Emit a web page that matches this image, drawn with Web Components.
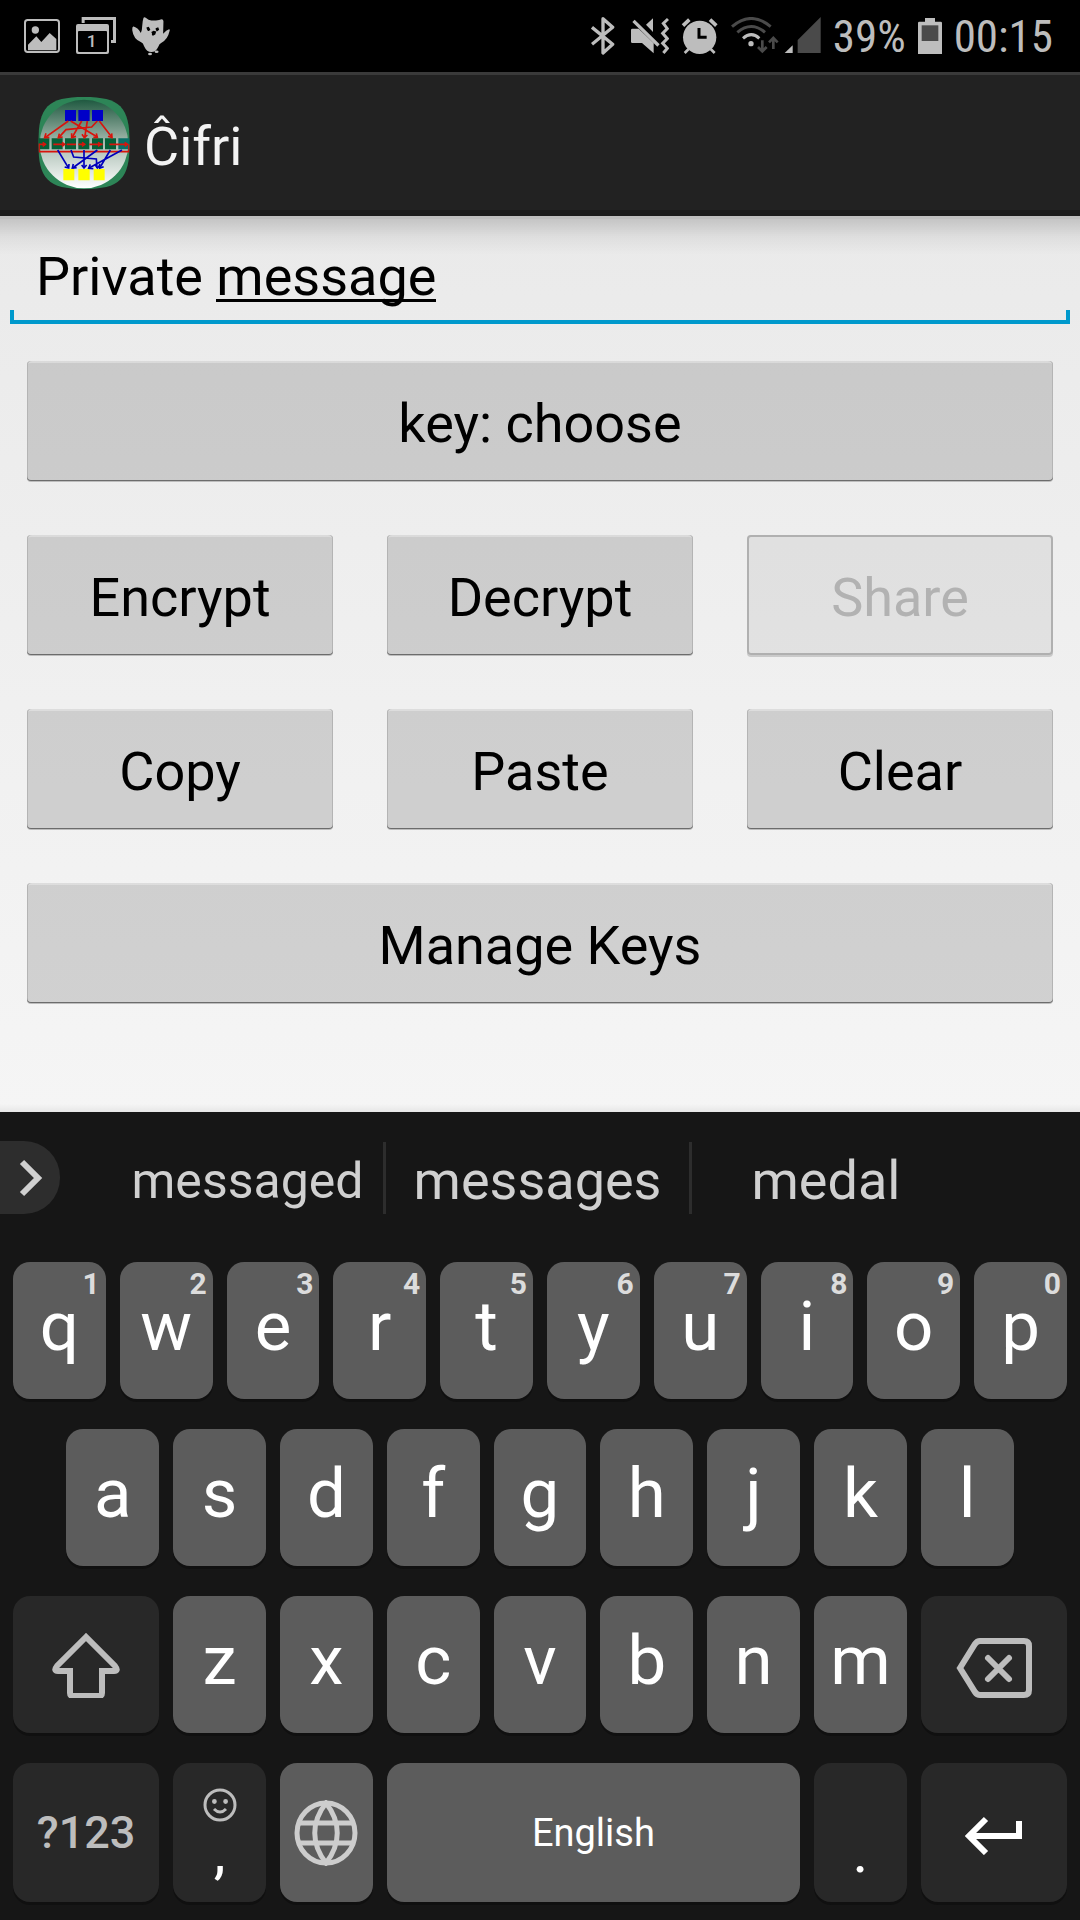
<!DOCTYPE html>
<html lang="en">
<head>
<meta charset="utf-8">
<meta name="viewport" content="width=device-width, initial-scale=1">
<title>Ĉifri</title>
<style>
  html, body { margin: 0; padding: 0; }
  body { background: #161616; font-family: Roboto, "Noto Sans", sans-serif; }
</style>
</head>
<body>
<cifri-app></cifri-app>

<script>
const define = (name, html, setup) => {
  const tpl = document.createElement('template');
  tpl.innerHTML = html;
  customElements.define(name, class extends HTMLElement {
    constructor() {
      super();
      this.attachShadow({ mode: 'open' }).append(tpl.content.cloneNode(true));
    }
    connectedCallback() {
      if (setup) setup(this, this.shadowRoot);
    }
  });
};

/* ---------- status bar ---------- */
define('status-bar', `
<style>
  :host { display: flex; align-items: center; justify-content: space-between; height: 72px; padding: 2px 27px 0 24px; background: #000; color: #bdbdbd; box-sizing: border-box; font-family: "Roboto Condensed", "Liberation Sans Narrow", Roboto, sans-serif; font-size: 45px; line-height: 54px; }
  .group { display: flex; align-items: center; gap: 12px; }
  .left { gap: 16px; }
  svg { display: block; height: 40px; fill: #bdbdbd; }
  .s { fill: none; stroke: #bdbdbd; }
  .dim { fill: #4a4a4a; }
  .sdim { fill: none; stroke: #4a4a4a; }
</style>
<div class="group left">
  <svg width="36" viewBox="72 51 108 120" role="img" aria-label="Screenshot saved">
    <rect class="s" x="75" y="60" width="102" height="96" rx="8" stroke-width="6"/>
    <circle cx="106" cy="90" r="11"/>
    <path d="M84 134l25-25 15 17 25-27 20 18v34H84z"/>
  </svg>
  <svg width="40" viewBox="231 51 120 120" role="img" aria-label="Calendar">
    <path d="M248 51h103v78h-15v-9h6V60h-85v9h-9z"/>
    <path fill-rule="evenodd" d="M237 72h87q6 0 6 6v78q0 6-6 6h-87q-6 0-6-6V78q0-6 6-6zm3 21q-3 0-3 3v56q0 4 4 4h79q4 0 4-4V96q0-3-3-3z"/>
    <text x="278" y="142" font-family="Roboto, sans-serif" font-weight="500" font-size="52" text-anchor="middle">1</text>
  </svg>
  <svg width="38" viewBox="392 51 116 120" role="img" aria-label="Owl">
    <path d="M427 53q2-4 8 0 7 6 16 8h14q11-1 17-4 6 0 6 6l-1 38q10-12 18-14 4 0 1 8-5 24-25 34-6 2-8 10-8 18-22 18t-22-18q-3-10-9-12-24-10-27-36-1-14 4-12 14 4 22 20 4-10 4-20 1-18 4-26z"/>
    <path fill="#000" d="M436 82l7-2 5 8-4 5q-6 0-8-11zM464 84l8-3 3 8-7 5q-4-2-4-10zM451 96l7-4 8 2-3 9-7 4q-5-2-3-7z"/>
    <ellipse cx="447" cy="163" rx="6" ry="4"/><ellipse cx="467" cy="156" rx="6" ry="4"/>
  </svg>
</div>
<div class="group">
  <svg width="28" viewBox="90 51 84 120" role="img" aria-label="Bluetooth">
    <path class="s" stroke-width="10" stroke-linejoin="round" d="M93 82l62 51-29 26V56l29 26-62 51"/>
  </svg>
  <svg width="38" viewBox="210 51 114 120" role="img" aria-label="Vibrate">
    <path d="M210 90q0-4 4-4h19l45 44v30l-35-31h-29q-4 0-4-4zM255 74l21-19v41zM221 59l75 74-7 7-75-74z"/>
    <path class="s" stroke-width="9" d="M321 57l-14 13 12 16-14 14 14 16-14 14 14 15-12 14"/>
  </svg>
  <svg width="38" viewBox="358 51 114 120" role="img" aria-label="Alarm">
    <circle cx="414" cy="112" r="50"/>
    <path class="s" stroke-width="11" d="M364 77l19-18M464 77l-19-18"/>
    <path class="s" stroke-width="8" d="M381 147l-12 12M447 147l12 12"/>
    <path fill="none" stroke="#000" stroke-width="9" d="M412 84v28h23"/>
  </svg>
  <svg width="90" viewBox="511 51 270 120" role="img" aria-label="Wi-Fi and mobile signal">
    <path class="sdim" stroke-width="9" d="M514 80q57-49 116 0M530 97q42-35 83 0"/>
    <path class="s" stroke-width="9" d="M547 115q25-22 49 0"/>
    <circle cx="571" cy="131" r="8"/>
    <path class="sdim" stroke-width="8" d="M605 121v32M592 141l13 13 13-13M638 147v-32M625 127l13-13 13 13"/>
    <path d="M696 136v23h-24z"/>
    <path class="dim" d="M780 51v108h-69v-39z"/>
  </svg>
  <span>39%</span>
  <svg width="24" viewBox="1074 51 72 120" role="img" aria-label="Battery">
    <path d="M1095 54h30v11h17q4 0 4 4v93h-72V69q0-4 4-4h17z"/>
    <rect class="dim" x="1085" y="76" width="50" height="47"/>
  </svg>
  <span>00:15</span>
</div>`);

/* ---------- title bar ---------- */
define('app-bar', `
<style>
  :host { display: flex; align-items: center; gap: 14px; height: 144px; padding: 0 38px; box-sizing: border-box; background: #222; border-top: 3px solid #3a3a3a; border-bottom: 6px solid #1b1b1b; color: #f3f3f3; }
  h1 { margin: 0; padding-top: 8px; font-size: 54px; line-height: 64px; font-weight: 400; }
  svg { display: block; width: 92px; height: 92px; }
</style>
<svg viewBox="24 21 276 276" role="img" aria-label="Cifri logo">
  <defs>
    <linearGradient id="g" x1="0" y1="0" x2="0" y2="1"><stop offset="0" stop-color="#1f5940"/><stop offset=".5" stop-color="#a9bdb2"/><stop offset="1" stop-color="#fff"/></linearGradient>
    <clipPath id="c"><path d="M162 21C270 21 299 50 299 159C299 268 270 297 162 297C54 297 25 268 25 159C25 50 54 21 162 21z"/></clipPath>
  </defs>
  <g clip-path="url(#c)">
    <path fill="#2d8557" d="M24 21h276v276H24z"/>
    <circle cx="162" cy="162" r="133" fill="url(#g)"/>
    <path fill="#0000c8" d="M105 60h33v33h-33zM145 60h34v33h-34zM186 60h33v33h-33z"/>
    <path fill="#056038" d="M25 145h33v33H25zM65 145h33v33H65zM105 145h33v33h-33zM145 145h33v33h-33zM186 145h33v33h-33zM225 145h33v33h-33z"/>
    <path fill="#087068" d="M265 145h35v33h-35z"/>
    <path fill="#ff0" d="M100 237h33v34h-33zM145 237h34v34h-34zM191 237h33v34h-33z"/>
    <g fill="none" stroke="#d8140c" stroke-width="5">
      <path d="M115 93l-69 49M122 93l80 48M155 93l-28 48M172 93l-8 50M202 93l-17 18-77 8-22 24M208 93l37 48"/>
      <path d="M48 130l-4 13 14-1M88 131l-3 12 13-2M125 130v13l13-4M156 133l7 10 9-8M190 142h12l-3-12M234 139l12 4-1-13"/>
      <path d="M46 163H27v22h270v-22M70 163h32M110 163h28M145 163h18M178 163h40M238 163h52"/>
      <path d="M38 157l8 6-8 6M96 157l8 6-8 6M156 157l8 6-8 6M204 157l8 6-8 6M284 157l8 6-8 6"/>
    </g>
    <g fill="none" stroke="#00b" stroke-width="5">
      <path d="M83 180l32 53M123 180l8 21 68 6 2 27M162 180v53M202 180l-74 54M241 180l-32 54M276 180l-100 55"/>
      <path d="M104 231l12 3 1-12M155 225l7 9 8-9M130 222l-3 12 13-1M196 225l6 9 7-8M209 221v13l12-4M181 223l-5 12 14 1"/>
    </g>
  </g>
</svg>
<h1><slot></slot></h1>`);

/* ---------- push button ---------- */
define('holo-button', `
<style>
  :host { display: block; min-width: 0; }
  button { display: block; width: 100%; height: 120px; margin: 0; padding: 5px 0 0; border: 0; border-radius: 4px; background: rgba(0,0,0,.14); color: #000; font: 400 54px/64px Roboto, "Noto Sans", sans-serif; box-shadow: inset 0 -1px #6c6c6c, inset 1px 0 #b4b4b4, inset -1px 0 #b4b4b4, inset 0 2px rgba(255,255,255,.3), 0 1px #bdbdbd; }
  button:disabled { background: rgba(0,0,0,.055); color: #b2b2b2; box-shadow: inset 0 0 0 2px #b0b0b0, 0 2px #cacaca; }
</style>
<button type="button"><slot></slot></button>`, (host, root) => {
  root.querySelector('button').disabled = host.hasAttribute('disabled');
});

/* ---------- message form ---------- */
define('message-form', `
<style>
  :host { display: block; padding: 13px 0 109px; box-sizing: border-box;
    background: linear-gradient(#bdbdbd, #bdbdbd) 0 0 / 100% 3px no-repeat,
      linear-gradient(rgba(0,0,0,.16), rgba(0,0,0,.05) 50%, rgba(0,0,0,0)) 0 3px / 100% 36px no-repeat,
      linear-gradient(rgba(0,0,0,0), rgba(0,0,0,.06)) 0 100% / 100% 8px no-repeat,
      linear-gradient(#eaeaea, #f5f5f5); }
  .field { padding: 0 10px; }
  input { display: block; width: 100%; height: 95px; box-sizing: border-box; margin: 0; padding: 0 26px; border: 0; border-radius: 0; outline: 0; color: #000; font: 400 54px/64px Roboto, "Noto Sans", sans-serif;
    background: linear-gradient(#0099cc, #0099cc) 0 100% / 100% 4px no-repeat,
      linear-gradient(#0099cc, #0099cc) 0 100% / 4px 14px no-repeat,
      linear-gradient(#0099cc, #0099cc) 100% 100% / 4px 14px no-repeat,
      linear-gradient(#000, #000) 206px 70px / 220px 3px no-repeat; }
  .buttons { display: grid; grid-template-columns: repeat(3, minmax(0, 1fr)); gap: 54px; padding: 37px 27px 0; }
  .wide { grid-column: 1 / -1; }
</style>
<div class="field"><input type="text" aria-label="Message" value="Private message" spellcheck="false"></div>
<div class="buttons">
  <holo-button class="wide">key: choose</holo-button>
  <holo-button>Encrypt</holo-button>
  <holo-button>Decrypt</holo-button>
  <holo-button disabled>Share</holo-button>
  <holo-button>Copy</holo-button>
  <holo-button>Paste</holo-button>
  <holo-button>Clear</holo-button>
  <holo-button class="wide">Manage Keys</holo-button>
</div>`);

/* ---------- word suggestions ---------- */
define('suggestion-strip', `
<style>
  :host { display: flex; align-items: center; height: 131px; padding-right: 120px; }
  button { border: 0; margin: 0; padding: 0; background: none; color: #d0d0d0; font: 400 54px/64px Roboto, "Noto Sans", sans-serif; }
  .more { width: 60px; height: 73px; margin-right: 52px; border-radius: 0 36px 36px 0; background: #2d2d2d; }
  svg { display: block; }
  .words { flex: 1; min-width: 0; display: grid; grid-template-columns: 274fr 306fr 268fr; }
  .words button { height: 72px; padding-top: 6px; border-right: 3px solid #2d2d2d; }
  .words button:last-child { border-right: 0; }
  .words .long { font-size: 50px; }
</style>
<button class="more" type="button" aria-label="More options">
  <svg width="60" height="73" viewBox="0 0 60 73"><path fill="none" stroke="#d0d0d0" stroke-width="6" d="M22 21l16 16-16 16"/></svg>
</button>
<div class="words">
  <button class="long" type="button">messaged</button>
  <button type="button">messages</button>
  <button type="button">medal</button>
</div>`);

/* ---------- one key: spans columns of the half-key grid ---------- */
define('key-cap', `
<style>
  :host { display: block; grid-column: span 2; min-width: 0; padding: 0 7px; height: 137px; }
  :host([wide]) { grid-column: span 3; }
  :host([space]) { grid-column: span 8; }
  :host([tall]) { height: 139px; }
  button { position: relative; display: flex; align-items: center; justify-content: center; width: 100%; height: 100%; margin: 0; padding: 0 0 8px; border: 0; border-radius: 17px; background: #5c5c5c; color: #fff; box-shadow: 0 3px #101010; font: 400 69px/80px Roboto, "Noto Sans", sans-serif; }
  :host([dark]) button { background: #282828; }
  :host([space]) button { font-size: 38px; padding: 0; }
  :host([symbols]) button { font-size: 45px; font-weight: 500; color: #bdbdbd; padding: 0; }
  :host([icon]) button { padding: 0; }
  :host([punct]) button { flex-direction: column; justify-content: flex-end; padding: 0 0 20px; font-size: 60px; line-height: 60px; }
  .hint { position: absolute; top: 7px; right: 6px; color: #dcdcdc; font-size: 30px; line-height: 30px; font-weight: 700; }
  .hint:empty { display: none; }
</style>
<button type="button"><slot></slot><span class="hint"></span></button>`, (host, root) => {
  root.querySelector('.hint').textContent = host.getAttribute('hint') || '';
  const label = host.getAttribute('label');
  if (label) root.querySelector('button').setAttribute('aria-label', label);
});

/* ---------- keyboard ---------- */
define('soft-keyboard', `
<style>
  :host { display: block; background: #161616; padding-bottom: 18px; }
  .rows { display: flex; flex-direction: column; gap: 30px; padding: 19px 6px 0; }
  .row { display: grid; grid-template-columns: repeat(20, minmax(0, 1fr)); }
  svg { display: block; fill: none; stroke: #bdbdbd; }
</style>
<suggestion-strip></suggestion-strip>
<div class="rows">
  <div class="row">
    <key-cap hint="1">q</key-cap><key-cap hint="2">w</key-cap><key-cap hint="3">e</key-cap><key-cap hint="4">r</key-cap><key-cap hint="5">t</key-cap><key-cap hint="6">y</key-cap><key-cap hint="7">u</key-cap><key-cap hint="8">i</key-cap><key-cap hint="9">o</key-cap><key-cap hint="0">p</key-cap>
  </div>
  <div class="row">
    <span></span><key-cap>a</key-cap><key-cap>s</key-cap><key-cap>d</key-cap><key-cap>f</key-cap><key-cap>g</key-cap><key-cap>h</key-cap><key-cap>j</key-cap><key-cap>k</key-cap><key-cap>l</key-cap>
  </div>
  <div class="row">
    <key-cap wide dark icon label="Shift"><svg width="68" height="66" viewBox="0 0 68 66" stroke-width="6"><path d="M34 5L5 34q-4 5 1 5h12v22q0 3 3 3h26q3 0 3-3V39h12q5 0 1-5z"/></svg></key-cap>
    <key-cap>z</key-cap><key-cap>x</key-cap><key-cap>c</key-cap><key-cap>v</key-cap><key-cap>b</key-cap><key-cap>n</key-cap><key-cap>m</key-cap>
    <key-cap wide dark icon label="Backspace"><svg width="76" height="66" viewBox="0 -6 76 66" stroke-width="6"><path d="M4 30L19 6q2-3 5-3h44q5 0 5 5v44q0 5-5 5H24q-3 0-5-3z"/><path stroke-linecap="round" d="M32 20l21 21M53 20L32 41"/></svg></key-cap>
  </div>
  <div class="row">
    <key-cap wide dark tall symbols>?123</key-cap>
    <key-cap dark tall punct><svg width="34" height="34" viewBox="0 0 34 34" stroke-width="3"><circle cx="17" cy="17" r="15"/><path d="M11 21q6 6 12 0"/><path stroke="none" fill="#bdbdbd" d="M9 13.500a2.400 2.400 0 1 0 4.800 0a2.400 2.400 0 1 0-4.800 0M20.200 13.500a2.400 2.400 0 1 0 4.800 0a2.400 2.400 0 1 0-4.800 0"/></svg><span>,</span></key-cap>
    <key-cap tall icon label="Switch language"><svg width="64" height="66" viewBox="0 0 64 66" stroke-width="5" style="stroke:#cdcdcd"><ellipse cx="32" cy="33" rx="29" ry="30"/><path d="M32 3C17 22 17 44 32 63C47 44 47 22 32 3zM6 23h52M6 43h52"/></svg></key-cap>
    <key-cap tall space>English</key-cap>
    <key-cap dark tall punct>.</key-cap>
    <key-cap wide dark tall icon label="Enter"><svg width="58" height="44" viewBox="0 -6 58 44" stroke-width="6" style="stroke:#fff"><path d="M54 4v15H5M21 2L4 19l17 17"/></svg></key-cap>
  </div>
</div>`);

/* ---------- screen ---------- */
define('cifri-app', `
<style>
  :host { display: flex; flex-direction: column; min-height: 100vh; }
  message-form { flex: 1 0 auto; }
</style>
<status-bar></status-bar>
<app-bar>Ĉifri</app-bar>
<message-form></message-form>
<soft-keyboard></soft-keyboard>`);
</script>
</body>
</html>
